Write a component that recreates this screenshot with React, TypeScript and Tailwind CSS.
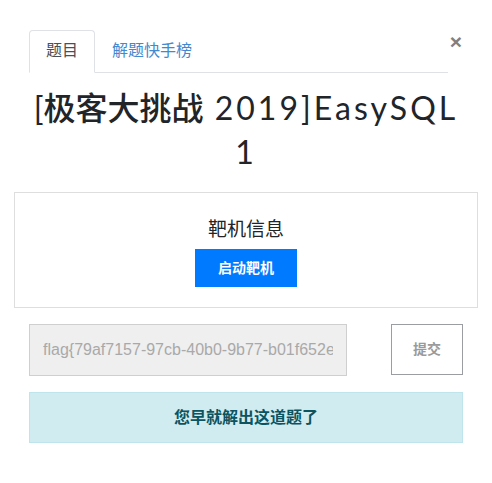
import React from 'react'

const cjk = '"Liberation Sans", "Noto Sans CJK SC", sans-serif'

export default function App() {
    return (
        <div className="w-[492px] h-[483px] bg-white px-[14px] pt-[30px]" style={{ fontFamily: cjk }}>
            {/* tabs + close */}
            <div className="flex items-start px-[15px]">
                <ul className="flex flex-1 border-b border-[#dee2e6]">
                    <li className="-mb-px rounded-t-[4px] border border-[#dee2e6] border-b-white bg-white px-4 py-2 text-[16px] leading-6 text-[#495057]">
                        题目
                    </li>
                    <li className="border border-transparent px-4 py-2 text-[16px] leading-6 text-[#4189d0]">
                        解题快手榜
                    </li>
                </ul>
                <button className="ml-[1px] w-[14px] text-center text-[21px] font-bold leading-none text-[#808080] pt-[1px]">
                    ×
                </button>
            </div>

            {/* title */}
            <h2
                className="mx-[15px] mt-[13px] text-center text-[32px] leading-[44px] text-[#212529]"
                style={{ fontFamily: '"Lato", "Noto Sans CJK SC", sans-serif' }}
            >
                <span>[</span>
                <span className="font-medium">极客大挑战</span>
                <span className="tracking-[3px]"> 2019]EasySQL 1</span>
            </h2>

            {/* target info */}
            <div className="mt-[18px] flex flex-col items-center border border-[#dedede] pt-[23px] pb-[20px]">
                <h5 className="text-[19px] leading-[28px] text-[#212529]">靶机信息</h5>
                <button className="mt-[5px] h-[38px] w-[102px] bg-[#007bff] text-[14px] font-bold text-white">
                    启动靶机
                </button>
            </div>

            {/* flag form */}
            <div className="mt-[16px] flex items-start justify-between px-[15px]">
                <input
                    disabled
                    value="flag{79af7157-97cb-40b0-9b77-b01f652e8a1c}"
                    className="h-[52px] w-[318px] border border-[#cfcfcf] bg-[#efefef] px-[13px] text-[16px] text-[#a9a9a9] outline-none"
                    style={{ fontFamily: '"Liberation Sans", sans-serif' }}
                    readOnly
                />
                <button className="h-[51px] w-[72px] border border-[#9a9ea3] bg-white text-[14px] font-bold text-[#9a9a9a]">
                    提交
                </button>
            </div>

            <div className="mx-[15px] mt-[16px] flex h-[51px] items-center justify-center border border-[#bee5eb] bg-[#d1ecf1] text-[16px] font-bold text-[#0c5460]">
                您早就解出这道题了
            </div>
        </div>
    )
}
